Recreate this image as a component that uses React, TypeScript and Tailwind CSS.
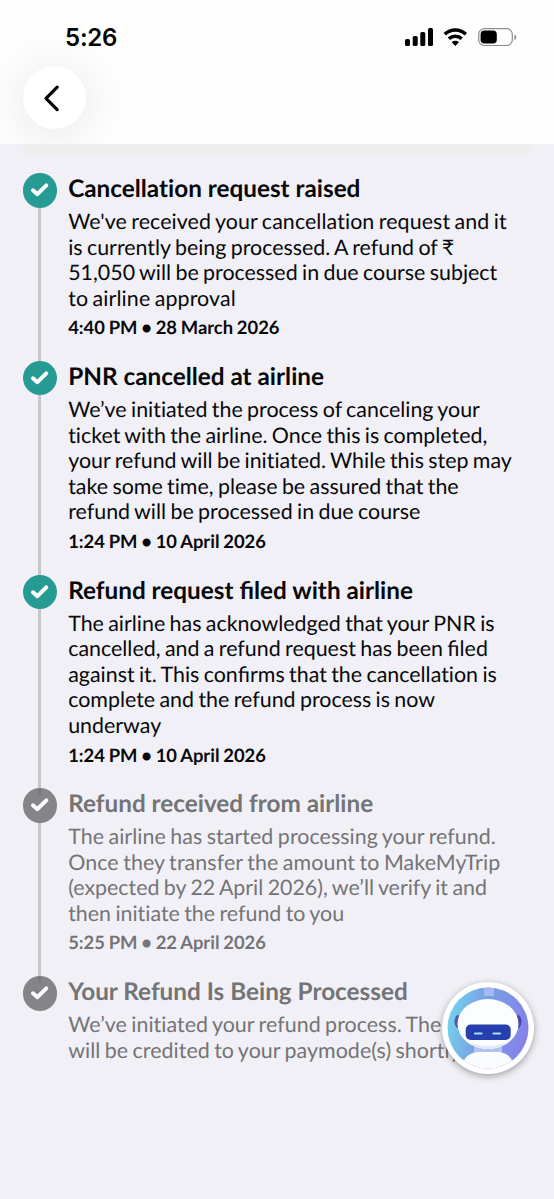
import clsx from "clsx";
import { Fragment } from "react";

interface Line {
  text: string;
  className?: string;
}

interface Step {
  title: string;
  lines: Line[];
  date?: string;
  done: boolean;
}

const steps: Step[] = [
  {
    title: "Cancellation request raised",
    lines: [
      {
        text: "We've received your cancellation request and it",
        className: "tracking-[0.08px]",
      },
      { text: "is currently being processed. A refund of ₹" },
      { text: "51,050 will be processed in due course subject" },
      { text: "to airline approval", className: "tracking-[0.1px]" },
    ],
    date: "4:40 PM • 28 March 2026",
    done: true,
  },
  {
    title: "PNR cancelled at airline",
    lines: [
      { text: "We’ve initiated the process of canceling your" },
      { text: "ticket with the airline. Once this is completed," },
      { text: "your refund will be initiated. While this step may" },
      { text: "take some time, please be assured that the" },
      { text: "refund will be processed in due course" },
    ],
    date: "1:24 PM • 10 April 2026",
    done: true,
  },
  {
    title: "Refund request filed with airline",
    lines: [
      { text: "The airline has acknowledged that your PNR is" },
      { text: "cancelled, and a refund request has been filed" },
      { text: "against it. This confirms that the cancellation is" },
      { text: "complete and the refund process is now" },
      { text: "underway" },
    ],
    date: "1:24 PM • 10 April 2026",
    done: true,
  },
  {
    title: "Refund received from airline",
    lines: [
      {
        text: "The airline has started processing your refund.",
        className: "tracking-[0.06px]",
      },
      {
        text: "Once they transfer the amount to MakeMyTrip",
        className: "tracking-[0.09px]",
      },
      { text: "(expected by 22 April 2026), we’ll verify it and" },
      { text: "then initiate the refund to you" },
    ],
    date: "5:25 PM • 22 April 2026",
    done: false,
  },
  {
    title: "Your Refund Is Being Processed",
    lines: [
      {
        text: "We’ve initiated your refund process. The amount",
        className: "tracking-[0.04px]",
      },
      {
        text: "will be credited to your paymode(s) shortly",
        className: "tracking-[0.04px]",
      },
    ],
    done: false,
  },
];

// Only the "fi" pair is joined, every other ligature stays off
function Label({ text }: { text: string }) {
  return (
    <>
      {text.split("fi").map((part, i) => (
        <Fragment key={i}>
          {i > 0 && (
            <span className="[font-variant-ligatures:common-ligatures]">fi</span>
          )}
          {part}
        </Fragment>
      ))}
    </>
  );
}

function StatusBar() {
  return (
    <div className="flex h-[66px] items-start justify-between pt-[23px] pr-[37px] pl-[65px]">
      <span className="font-[Inter] text-[24px] leading-[30px] font-semibold tracking-[-0.2px] text-black">
        5:26
      </span>
      <svg className="mt-[4px]" width="112" height="20" viewBox="0 0 112 20">
        <rect x="0" y="12" width="5" height="7" rx="1.6" />
        <rect x="7.7" y="9" width="5" height="10" rx="1.6" />
        <rect x="15.3" y="5" width="5" height="14" rx="1.6" />
        <rect x="23" y="1" width="5" height="18" rx="1.6" />
        <g fill="none" stroke="#000" strokeWidth="3.6">
          <path d="M39.8 7.2a15.2 15.2 0 0 1 21 0" />
          <path d="M43.9 11.8a9.3 9.3 0 0 1 12.8 0" />
        </g>
        <path d="M50.3 18.9 46.7 15.2a5.2 5.2 0 0 1 7.2 0z" />
        <rect x="73.7" y="1.7" width="33.6" height="16.8" rx="5.6" fill="none" stroke="#8e8e8e" strokeWidth="1.2" />
        <rect x="75.6" y="3.6" width="16.2" height="13" rx="3.8" />
        <path d="M109.4 7.5c2.6 1 2.6 4.6 0 5.6z" fill="#8e8e8e" />
      </svg>
    </div>
  );
}

function Header() {
  return (
    <header className="h-[143.5px] overflow-hidden bg-[#fefefe]">
      <StatusBar />
      <button className="ml-[22.5px] flex size-[63px] items-center justify-center rounded-full bg-white shadow-[0_5px_48px_4px_rgba(0,0,0,0.09)]">
        <svg width="20" height="28" viewBox="0 0 20 28" className="-ml-[6px]" fill="none" stroke="#000" strokeWidth="3.2" strokeLinecap="round" strokeLinejoin="round">
          <path d="M16.2 3.2 5 14.4l11.2 11.2" />
        </svg>
      </button>
    </header>
  );
}

function StepItem({ step, last }: { step: Step; last: boolean }) {
  return (
    <li className="relative flex gap-[11.2px]">
      {!last && (
        <span className="absolute top-[34px] -bottom-[7px] left-[15.5px] w-[3px] bg-[#c8c8cc]" />
      )}
      <span
        className={clsx(
          "relative flex size-[34.5px] shrink-0 items-center justify-center rounded-full",
          step.done ? "z-10 bg-[#259b94]" : "bg-[#606063]/75"
        )}
      >
        <svg width="20" height="16" viewBox="0 0 20 16" fill="none" stroke="#fff" strokeWidth="4" strokeLinecap="round" strokeLinejoin="round">
          <path d="M3 8.3 7.4 12.2 16.3 3.4" />
        </svg>
      </span>
      <div
        className={clsx(
          "whitespace-nowrap [font-variant-ligatures:none] [text-rendering:geometricPrecision]",
          step.done ? "text-[#08080a]" : "text-[#747477]"
        )}
      >
        <h2 className="h-[36px] text-[24.3px] leading-[31px] font-bold">
          <Label text={step.title} />
        </h2>
        <p className="text-[21.4px] leading-[25.6px] [word-spacing:-1.1px]">
          {step.lines.map((line) => (
            <span key={line.text} className={clsx("block", line.className)}>
              <Label text={line.text} />
            </span>
          ))}
        </p>
        {step.date && (
          <p className="h-[49.6px] pt-[4px] text-[18.4px] leading-[25px] font-bold [word-spacing:-0.7px]">
            {step.date}
          </p>
        )}
      </div>
    </li>
  );
}

function ChatBot() {
  return (
    <button className="absolute top-[982px] left-[442px] size-[92px] rounded-full bg-white shadow-[0_2px_7px_rgba(0,0,0,0.35)]">
      <svg width="92" height="92" viewBox="0 0 92 92">
        <defs>
          <linearGradient id="bot-bg" x1="0" y1="0.4" x2="1" y2="0.6">
            <stop offset="0" stopColor="#72d3ed" />
            <stop offset="0.35" stopColor="#79a5e5" />
            <stop offset="1" stopColor="#8580e8" />
          </linearGradient>
          <clipPath id="bot-clip">
            <circle cx="46" cy="46" r="40.5" />
          </clipPath>
        </defs>
        <circle cx="46" cy="46" r="40.5" fill="url(#bot-bg)" />
        <g clipPath="url(#bot-clip)">
          <path d="M42 5h10v9H42z" fill="#a5b8ef" />
          <ellipse cx="16" cy="39.5" rx="3.5" ry="6.5" fill="#5554b5" />
          <ellipse cx="76" cy="39.5" rx="3.5" ry="6.5" fill="#4746ae" />
          <path d="M32 64h28v9H32z" fill="#b4c3ee" />
          <ellipse cx="46" cy="42" rx="30.5" ry="25" fill="#fcfdff" />
          <path d="M27 60q19 8 38 0-7 7-19 7T27 60z" fill="#e3ebf8" />
          <path d="M18 92c2-16 8-22 20-22h16c12 0 18 6 20 22z" fill="#fafcff" />
          <rect x="23.7" y="42.5" width="45" height="15.5" rx="5" fill="#273fae" />
          <path d="M33 51.5h6.5M51.5 51.5H58" stroke="#9de3ff" strokeWidth="2.2" strokeLinecap="round" />
        </g>
      </svg>
    </button>
  );
}

export default function App() {
  return (
    <div className="relative h-[1199px] w-[554px] overflow-hidden bg-[#f1f0f6] font-[Lato,sans-serif]">
      <Header />
      <div className="mx-[22px] h-[12px] rounded-b-[12px] bg-[#eeeeef]" />
      <ul className="mt-[17.5px] ml-[22.5px]">
        {steps.map((step, i) => (
          <StepItem key={step.title} step={step} last={i === steps.length - 1} />
        ))}
      </ul>
      <ChatBot />
    </div>
  );
}
